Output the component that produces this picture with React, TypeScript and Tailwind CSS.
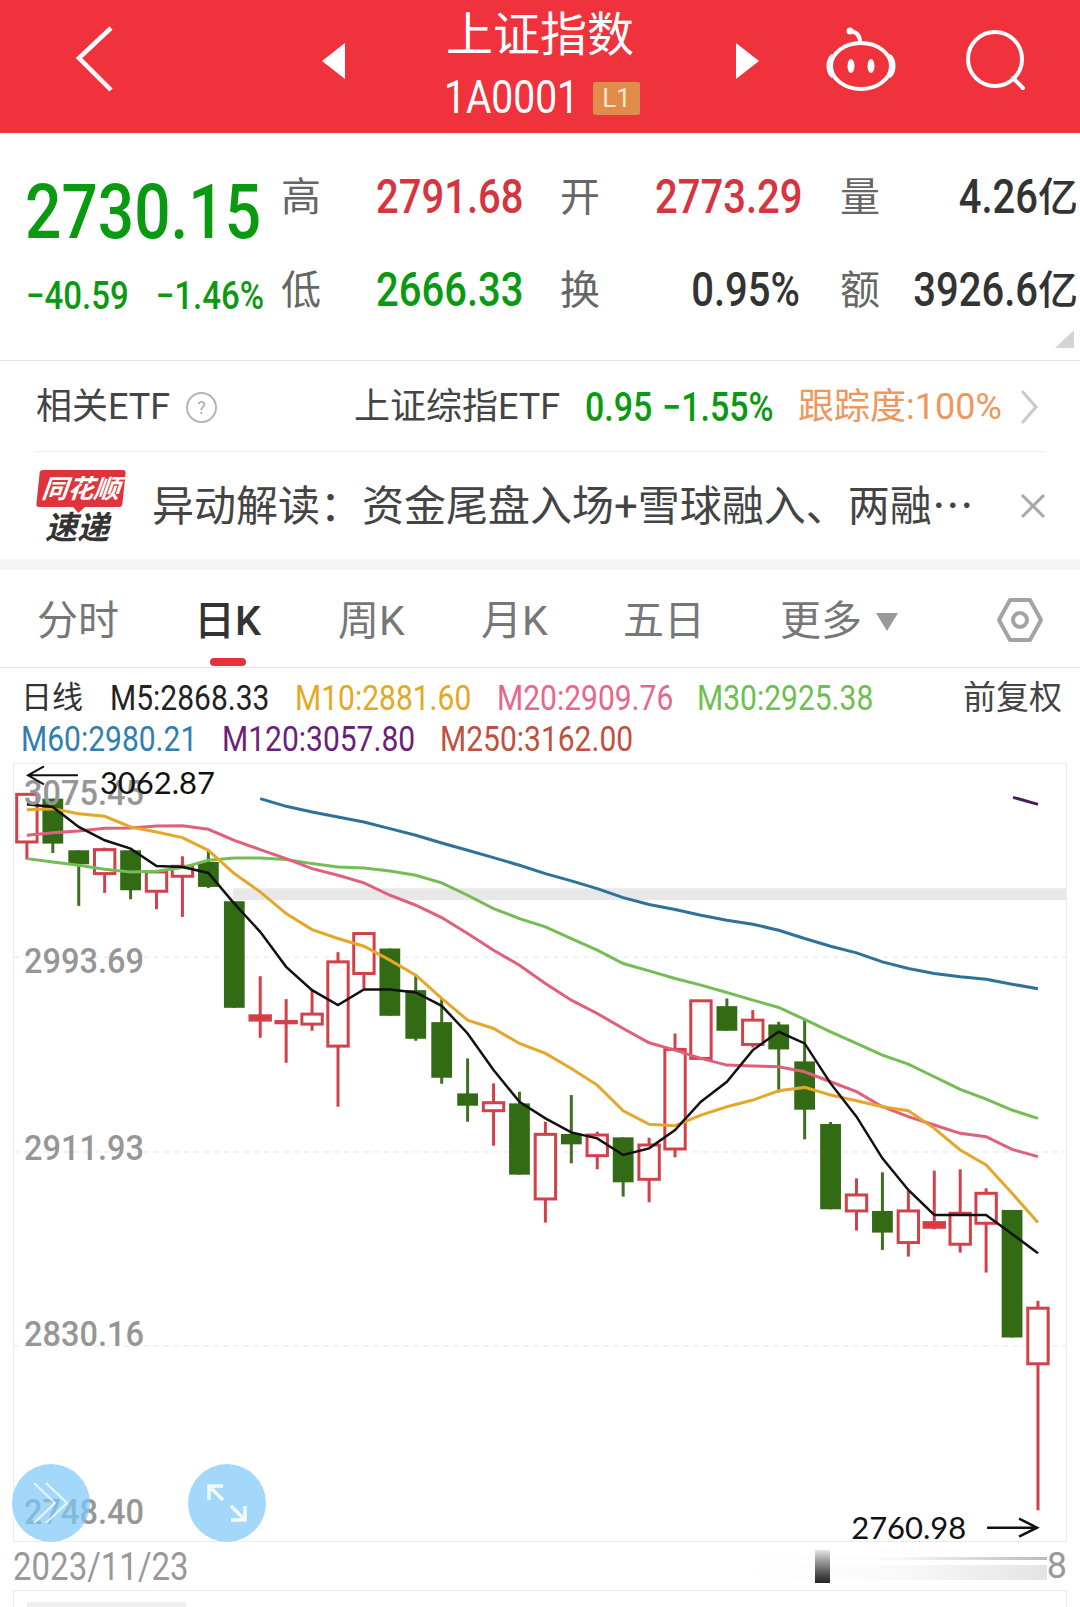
import React from 'react'

// y values of the chart data are in thirds of a pixel, measured from y=760
const Y = (v: number) => 760 + v / 3
const X = (i: number) => 26.9 + 25.95 * i

type Candle = { up: boolean; top: number; open: number; close: number; low: number; solid?: boolean }

const c = (up: boolean, top: number, open: number, close: number, low: number, solid?: boolean): Candle => ({ up, top, open, close, low, solid })

const candles: Candle[] = [
    c(true, 102, 102, 245, 298),
    c(false, 115, 115, 250, 278),
    c(false, 270, 270, 312, 437),
    c(true, 262, 268, 340, 398),
    c(false, 270, 270, 390, 417),
    c(true, 335, 335, 393, 447),
    c(true, 288, 318, 348, 470),
    c(false, 268, 305, 380, 383),
    c(false, 423, 423, 743, 743),
    c(true, 648, 767, 780, 833, true),
    c(true, 717, 784, 788, 908, true),
    c(true, 690, 762, 792, 812),
    c(true, 576, 605, 858, 1040),
    c(true, 520, 520, 640, 685),
    c(false, 565, 565, 767, 767),
    c(false, 643, 690, 836, 842),
    c(false, 715, 786, 953, 971),
    c(false, 895, 1000, 1037, 1085),
    c(true, 970, 1028, 1052, 1157),
    c(false, 995, 1030, 1244, 1244),
    c(true, 1085, 1123, 1317, 1388),
    c(false, 1005, 1122, 1153, 1210),
    c(true, 1115, 1125, 1187, 1228),
    c(false, 1132, 1132, 1267, 1310),
    c(true, 1133, 1155, 1258, 1327),
    c(true, 820, 868, 1167, 1192),
    c(true, 722, 722, 895, 900),
    c(false, 715, 738, 812, 812),
    c(true, 750, 780, 853, 862),
    c(false, 785, 793, 868, 997),
    c(false, 780, 904, 1049, 1138),
    c(false, 1086, 1092, 1348, 1348),
    c(true, 1255, 1305, 1353, 1412),
    c(false, 1237, 1353, 1418, 1470),
    c(true, 1290, 1353, 1448, 1490),
    c(true, 1232, 1388, 1402, 1408, true),
    c(true, 1228, 1360, 1453, 1478),
    c(true, 1285, 1300, 1390, 1538),
    c(false, 1350, 1350, 1733, 1733),
    c(true, 1623, 1645, 1812, 2252),
]

const m5 = [132, 140, 200, 240, 265, 317, 320, 338, 430, 515, 620, 690, 735, 688, 688, 697, 737, 820, 930, 1025, 1075, 1117, 1135, 1185, 1165, 1110, 1025, 965, 870, 815, 850, 970, 1070, 1195, 1290, 1365, 1365, 1365, 1422, 1480]
const m10 = [148, 145, 160, 168, 200, 215, 232, 270, 340, 395, 460, 508, 535, 558, 600, 645, 715, 780, 805, 850, 880, 925, 975, 1052, 1093, 1097, 1065, 1040, 1020, 992, 982, 1005, 1022, 1040, 1052, 1105, 1170, 1215, 1300, 1388]
const m20 = [225, 217, 212, 204, 203, 197, 196, 207, 240, 268, 295, 325, 345, 368, 405, 435, 472, 520, 570, 615, 670, 720, 760, 805, 848, 870, 895, 915, 918, 920, 935, 965, 995, 1040, 1070, 1095, 1120, 1130, 1168, 1190]
const m30 = [295, 305, 315, 327, 335, 333, 322, 300, 293, 293, 298, 310, 320, 323, 332, 345, 368, 405, 445, 475, 500, 535, 570, 610, 632, 655, 675, 697, 720, 742, 778, 815, 850, 885, 912, 950, 988, 1017, 1050, 1075]
const m60 = [115, 138, 155, 170, 185, 205, 225, 248, 270, 292, 315, 340, 362, 385, 412, 433, 448, 465, 480, 492, 510, 535, 558, 578, 605, 625, 640, 650, 657, 672, 686]

const toPoints = (values: number[], start = 0) =>
    values.map((v, i) => `${X(i + start)},${Y(v)}`).join(' ')

const Num = ({ children, className = '' }: { children: React.ReactNode; className?: string }) => (
    <span className={`inline-block scale-y-[1.18] ${className}`}>{children}</span>
)

const Header = () => (
    <header className="relative flex h-[133px] items-center justify-center bg-[#f0323c] pb-[10px] text-white">
        <svg className="absolute left-[74px] top-[24px]" width="42" height="70" viewBox="0 0 42 70" fill="none">
            <path d="M37 4 L5 34 L37 66" stroke="white" strokeWidth="4.5" />
        </svg>
        <svg className="absolute left-[322px] top-[43px]" width="24" height="36" viewBox="0 0 24 36">
            <path d="M23 0 V36 L0 18 Z" fill="white" />
        </svg>
        <div className="flex flex-col items-center">
            <div className="text-[47px] leading-[58px] font-normal">上证指数</div>
            <div className="flex items-center gap-[14px] pl-[4px] pt-[15px]">
                <Num className="text-[39px] leading-[38px] font-normal">1A0001</Num>
                <span className="flex h-[33px] w-[47px] items-center justify-center rounded-[2px] bg-[#e08c4a] text-[26px] text-[#ffe6cc]">L1</span>
            </div>
        </div>
        <svg className="absolute left-[735px] top-[43px]" width="24" height="36" viewBox="0 0 24 36">
            <path d="M1 0 V36 L24 18 Z" fill="white" />
        </svg>
        <svg className="absolute left-[824px] top-[26px]" width="76" height="68" viewBox="0 0 76 68" fill="none" stroke="white" strokeWidth="4">
            <circle cx="26" cy="5" r="3.5" fill="white" stroke="none" />
            <path d="M26 5 C33 6 36 10 36 16" />
            <ellipse cx="37" cy="40" rx="30" ry="23" />
            <path d="M8 31 C4 35 4 45 8 49 M66 31 C70 35 70 45 66 49" strokeWidth="5" strokeLinecap="round" />
            <ellipse cx="27" cy="40" rx="3.5" ry="7" fill="white" stroke="none" />
            <ellipse cx="47" cy="40" rx="3.5" ry="7" fill="white" stroke="none" />
        </svg>
        <svg className="absolute left-[962px] top-[28px]" width="68" height="66" viewBox="0 0 68 66" fill="none" stroke="white" strokeWidth="4">
            <circle cx="33" cy="31" r="27" />
            <path d="M51 50 L61 60" strokeLinecap="round" />
        </svg>
    </header>
)

const Stats = () => (
    <section className="relative h-[228px] border-b border-[#e6e6e6]">
        <div className="grid grid-cols-[281px_95px_184px_95px_145px_40px_40px_198px] grid-rows-[93px_93px] pt-[19px] text-[40px] text-[#666]">
            <Num className="pl-[25px] pt-[28px] text-[64px] leading-[62px] font-medium text-[#0a9a12]">2730.15</Num>
            <span className="leading-[92px]">高</span>
            <Num className="font-medium leading-[92px] text-[#d6353f]">2791.68</Num>
            <span className="leading-[92px]">开</span>
            <Num className="font-medium leading-[92px] text-[#d6353f]">2773.29</Num>
            <span />
            <span className="leading-[92px]">量</span>
            <span className="text-right font-medium leading-[92px] text-[#333]"><Num>4.26</Num>亿</span>

            <div className="flex gap-[27px] pl-[26px] pt-[5px] text-[33px] font-medium leading-[92px] text-[#0a9a12]">
                <Num>−40.59</Num>
                <Num>−1.46%</Num>
            </div>
            <span className="leading-[92px]">低</span>
            <Num className="font-medium leading-[92px] text-[#0a9a12]">2666.33</Num>
            <span className="leading-[92px]">换</span>
            <Num className="text-right font-medium leading-[92px] text-[#333]">0.95%</Num>
            <span />
            <span className="leading-[92px]">额</span>
            <span className="text-right font-medium leading-[92px] text-[#333]"><Num>3926.6</Num>亿</span>
        </div>
        <svg className="absolute left-[1055px] top-[197px]" width="19" height="18" viewBox="0 0 19 18">
            <path d="M19 0 V18 H0 Z" fill="#d4d4d4" />
        </svg>
    </section>
)

const EtfRow = () => (
    <div className="mx-[36px] flex h-[91px] items-center border-b border-[#eeeeee] pt-[2px] text-[36px] text-[#444]">
        <span className="w-[150px]">相关ETF</span>
        <span className="flex h-[31px] w-[31px] items-center justify-center rounded-full border-2 border-[#b5b5b5] text-[18px] text-[#aaa]">?</span>
        <span className="ml-[137px] w-[231px]">上证综指ETF</span>
        <Num className="w-[77px] text-[34px] font-medium text-[#0a9a12]">0.95</Num>
        <Num className="w-[136px] text-[34px] font-medium text-[#0a9a12]">−1.55%</Num>
        <span className="w-[222px] text-[#f0965c]">跟踪度:100%</span>
        <svg width="18" height="34" viewBox="0 0 18 34" fill="none">
            <path d="M2 1 L16 17 L2 33" stroke="#c9c9c9" strokeWidth="3" />
        </svg>
    </div>
)

const Notice = () => (
    <div className="flex h-[107px] items-center pl-[37px]">
        <div className="flex w-[88px] flex-col items-center pt-[2px]">
            <div className="relative flex h-[37px] w-[86px] -skew-x-6 items-center justify-center rounded-[3px] bg-[#e0343c] text-[26px] font-bold italic leading-none text-white">
                同花顺
                <span className="absolute -bottom-[6px] left-[36px] h-0 w-0 border-x-[7px] border-t-[7px] border-x-transparent border-t-[#e0343c]" />
            </div>
            <div className="pr-[8px] pt-[5px] text-[32px] font-bold italic leading-[32px] text-[#333]">速递</div>
        </div>
        <div className="w-[830px] pl-[27px] pt-[2px] text-[42px] leading-none whitespace-nowrap text-[#444]">异动解读：资金尾盘入场+雪球融入、两融⋯</div>
        <svg className="ml-[65px]" width="26" height="26" viewBox="0 0 26 26" fill="none">
            <path d="M2 2 L24 24 M24 2 L2 24" stroke="#a8a8a8" strokeWidth="3" />
        </svg>
    </div>
)

const tabs = [
    { label: '分时', width: 'w-[157px]', active: false },
    { label: '日K', width: 'w-[144px]', active: true },
    { label: '周K', width: 'w-[143px]', active: false },
    { label: '月K', width: 'w-[142px]', active: false },
    { label: '五日', width: 'w-[157px]', active: false },
]

const Tabs = () => (
    <div className="relative flex h-[98px] items-center border-b border-[#e6e6e6] pl-[37px] pt-[6px] text-[41px] text-[#777]">
        {tabs.map((tab) => (
            <span key={tab.label} className={`${tab.width} ${tab.active ? 'font-medium text-[#333]' : ''}`}>
                {tab.label}
                {tab.active && <span className="absolute left-[210px] top-[88px] h-[8px] w-[36px] rounded-full bg-[#e5323c]" />}
            </span>
        ))}
        <span className="w-[96px]">更多</span>
        <svg width="22" height="18" viewBox="0 0 22 18">
            <path d="M0 0 H22 L11 18 Z" fill="#999" />
        </svg>
        <svg className="ml-[98px] -mt-[4px]" width="48" height="46" viewBox="0 0 48 46" fill="none" stroke="#a3a3a3" strokeWidth="4">
            <path d="M14 3 H34 L45 23 L34 43 H14 L3 23 Z" strokeLinejoin="round" />
            <circle cx="24" cy="23" r="7" />
        </svg>
    </div>
)

const MaLegend = () => (
    <div className="h-[95px] pt-[9px] text-[30px] leading-[41px] font-normal">
        <div className="flex items-center pl-[21px] pr-[18px]">
            <span className="w-[89px] text-[31px] text-[#333]">日线</span>
            <Num className="w-[185px] text-[#222]">M5:2868.33</Num>
            <Num className="w-[202px] text-[#e5a820]">M10:2881.60</Num>
            <Num className="w-[200px] text-[#e8668a]">M20:2909.76</Num>
            <Num className="w-[266px] text-[#6cc04f]">M30:2925.38</Num>
            <span className="text-[33px] text-[#444]">前复权</span>
        </div>
        <div className="flex items-center pl-[21px]">
            <Num className="w-[201px] text-[#2f80b0]">M60:2980.21</Num>
            <Num className="w-[218px] text-[#6a1f7a]">M120:3057.80</Num>
            <Num className="text-[#c0503c]">M250:3162.00</Num>
        </div>
    </div>
)

const axisLabels = [
    { text: '3075.45', y: 805 },
    { text: '2993.69', y: 973 },
    { text: '2911.93', y: 1160 },
    { text: '2830.16', y: 1346 },
    { text: '2748.40', y: 1524 },
]

const Chart = () => (
    <div className="relative mx-[13px] h-[779px] border border-[#ececec]">
        <svg className="block h-full w-full overflow-visible" viewBox="14 764 1053 777" fill="none">
            <rect x="233" y="888" width="834" height="12" fill="#e8e8e8" />
            {[957, 1152, 1346].map((y) => (
                <line key={y} x1="14" x2="1067" y1={y} y2={y} stroke="#e4e4e4" strokeWidth="1" strokeDasharray="5 5" />
            ))}
            {candles.map((d, i) => (
                <g key={i}>
                    <line
                        x1={X(i)}
                        x2={X(i)}
                        y1={Y(d.top)}
                        y2={Y(d.low)}
                        stroke={d.up ? '#d2404a' : '#3d7020'}
                        strokeWidth="3"
                    />
                    {d.up ? (
                        <rect
                            x={X(i) - 10.2}
                            y={Y(d.open)}
                            width="20.4"
                            height={Y(d.close) - Y(d.open)}
                            fill={d.solid ? '#e0343c' : 'white'}
                            stroke="#d2404a"
                            strokeWidth="3"
                        />
                    ) : (
                        <rect x={X(i) - 10.4} y={Y(d.open)} width="20.8" height={Y(d.close) - Y(d.open)} fill="#336b14" />
                    )}
                </g>
            ))}
            <polyline points={toPoints(m60, 9)} stroke="#2f7299" strokeWidth="3" />
            <polyline points={toPoints(m30)} stroke="#74bd55" strokeWidth="3" />
            <polyline points={toPoints(m20)} stroke="#e0607c" strokeWidth="3" />
            <polyline points={toPoints(m10)} stroke="#e5a72a" strokeWidth="3" />
            <polyline points={toPoints(m5)} stroke="#111" strokeWidth="2.5" />
            <line x1="1014" y1="797" x2="1039" y2="804" stroke="#4a1a5c" strokeWidth="3" />
            {axisLabels.map((label) => (
                <text key={label.text} x="24" y={label.y} fill="#969696" fontSize="35" fontWeight="500" textLength="120" lengthAdjust="spacingAndGlyphs">
                    {label.text}
                </text>
            ))}
            <text x="100" y="794" fill="#111" fontSize="31" fontFamily="Lato, sans-serif">3062.87</text>
            <path d="M78 775 H28 M44 766 L28 775 L44 784" stroke="#111" strokeWidth="2" />
            <text x="852" y="1539" fill="#111" fontSize="31" fontFamily="Lato, sans-serif">2760.98</text>
            <path d="M988 1528 H1038 M1020 1519 L1038 1528 L1020 1537" stroke="#111" strokeWidth="2.5" />
        </svg>
        <div className="absolute -left-[2px] top-[700px] flex h-[78px] w-[78px] items-center justify-center rounded-full bg-[#7cc8f8]/70">
            <svg width="36" height="42" viewBox="0 0 36 42" fill="none" stroke="white" strokeOpacity="0.75" strokeWidth="2">
                <path d="M1 1 L22 21 L1 41 M13 1 L34 21 L13 41" />
            </svg>
        </div>
        <div className="absolute left-[174px] top-[700px] flex h-[78px] w-[78px] items-center justify-center rounded-full bg-[#7cc8f8]/70">
            <svg width="40" height="38" viewBox="0 0 40 38" fill="none" stroke="white" strokeWidth="3.5" strokeOpacity="0.85">
                <path d="M2 16 V2 H16 M2 2 L16 16 M38 22 V36 H24 M38 36 L24 22" />
            </svg>
        </div>
    </div>
)

const TimeBar = () => (
    <div className="mx-[13px] flex h-[49px] items-center border-b border-[#ececec]">
        <Num className="text-[33px] leading-none text-[#999]">2023/11/23</Num>
        <div className="relative ml-[555px] h-[33px] w-[305px]">
            <div className="absolute inset-x-0 top-[7px] h-[3px] bg-gradient-to-r from-white via-[#fafafa] to-[#bbbbbb]" />
            <div className="absolute inset-x-0 top-[15px] h-[15px] bg-gradient-to-r from-white via-[#fafafa] to-[#e4e4e4]" />
            <div className="absolute left-[71px] top-0 h-[33px] w-[15px] bg-gradient-to-b from-[#e4e4e4] to-[#222]" />
        </div>
        <span className="text-[36px] leading-none text-[#999]">8</span>
    </div>
)

const App = () => {
    return (
        <main className="h-[1607px] w-[1080px] overflow-hidden bg-white font-['Roboto','Noto_Sans_CJK_SC',sans-serif]">
            <Header />
            <Stats />
            <EtfRow />
            <Notice />
            <div className="h-[11px] bg-[#f5f5f5]" />
            <Tabs />
            <MaLegend />
            <Chart />
            <TimeBar />
            <div className="mx-[13px] h-[16px] border-x border-[#ececec] pl-[13px] pt-[11px]">
                <div className="h-[5px] w-[159px] bg-[#eeeeee]" />
            </div>
        </main>
    )
}

export default App
